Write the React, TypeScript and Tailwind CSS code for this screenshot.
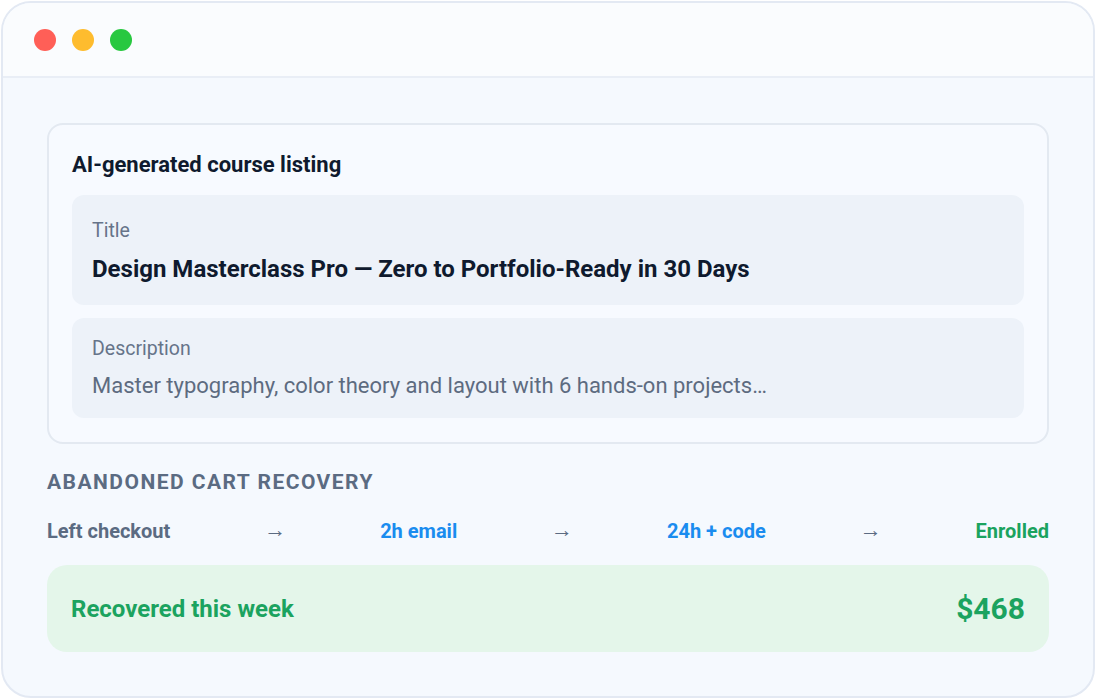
export default function App() {
  return (
    <div
      className="h-[699px] w-[1096px] bg-white p-px"
      style={{ fontFamily: "Roboto, 'Liberation Sans', sans-serif" }}
    >
      <div className="flex h-[697px] flex-col overflow-hidden rounded-[30px] border-2 border-[#e3e9f3] bg-[#f5f9fe]">
        {/* Title bar */}
        <div className="flex h-[75px] shrink-0 items-center gap-4 border-b-2 border-[#e9eef6] bg-[#fafcfe] pl-[31px]">
          <span className="h-[22px] w-[22px] rounded-full bg-[#ff5f57]" />
          <span className="h-[22px] w-[22px] rounded-full bg-[#febc2e]" />
          <span className="h-[22px] w-[22px] rounded-full bg-[#28c840]" />
        </div>

        <div className="flex flex-col px-[44px] pt-[45px]">
          {/* Listing card */}
          <div className="rounded-[16px] border-2 border-[#e3e9f1] bg-[#f7faff] px-[23px] pb-[24px] pt-[27px]">
            <h2 className="text-[22px] font-bold leading-[26px] text-[#0f1a2e]">AI-generated course listing</h2>
            <div className="mt-[17px] rounded-[12px] bg-[#edf2f9] px-5 pb-[22px] pt-[24px]">
              <div className="text-[19.5px] leading-[24px] text-[#667489]">Title</div>
              <div className="mt-[12px] text-[24px] font-bold leading-[28px] text-[#0f1a2e]">
                Design Masterclass Pro — Zero to Portfolio-Ready in 30 Days
              </div>
            </div>
            <div className="mt-[13px] rounded-[12px] bg-[#edf2f9] px-5 pb-[19px] pt-[19px]">
              <div className="text-[19.5px] leading-[24px] text-[#667489]">Description</div>
              <div className="mt-[12px] text-[22px] leading-[26px] text-[#5d6b80]">
                Master typography, color theory and layout with 6 hands-on projects…
              </div>
            </div>
          </div>

          {/* Cart recovery */}
          <div className="mt-[25px] text-[21px] font-bold uppercase leading-[26px] tracking-[0.07em] text-[#5b6b82]">
            Abandoned cart recovery
          </div>
          <div className="mt-[24px] flex items-center justify-between text-[20px] font-bold leading-[24px]">
            <span className="text-[#5b6b82]">Left checkout</span>
            <span className="-mt-[3px] text-[22px] font-medium text-[#5b6b82]">→</span>
            <span className="text-[#1a8cef]">2h email</span>
            <span className="-mt-[3px] text-[22px] font-medium text-[#5b6b82]">→</span>
            <span className="text-[#1a8cef]">24h + code</span>
            <span className="-mt-[3px] text-[22px] font-medium text-[#5b6b82]">→</span>
            <span className="text-[#1ba35f]">Enrolled</span>
          </div>

          <div className="mt-[22px] flex h-[87px] items-center justify-between rounded-[20px] bg-[#e4f6ea] px-6">
            <span className="text-[24px] font-bold text-[#1ba35f]">Recovered this week</span>
            <span className="text-[30px] font-bold text-[#1ba35f]">$468</span>
          </div>
        </div>
      </div>
    </div>
  );
}
